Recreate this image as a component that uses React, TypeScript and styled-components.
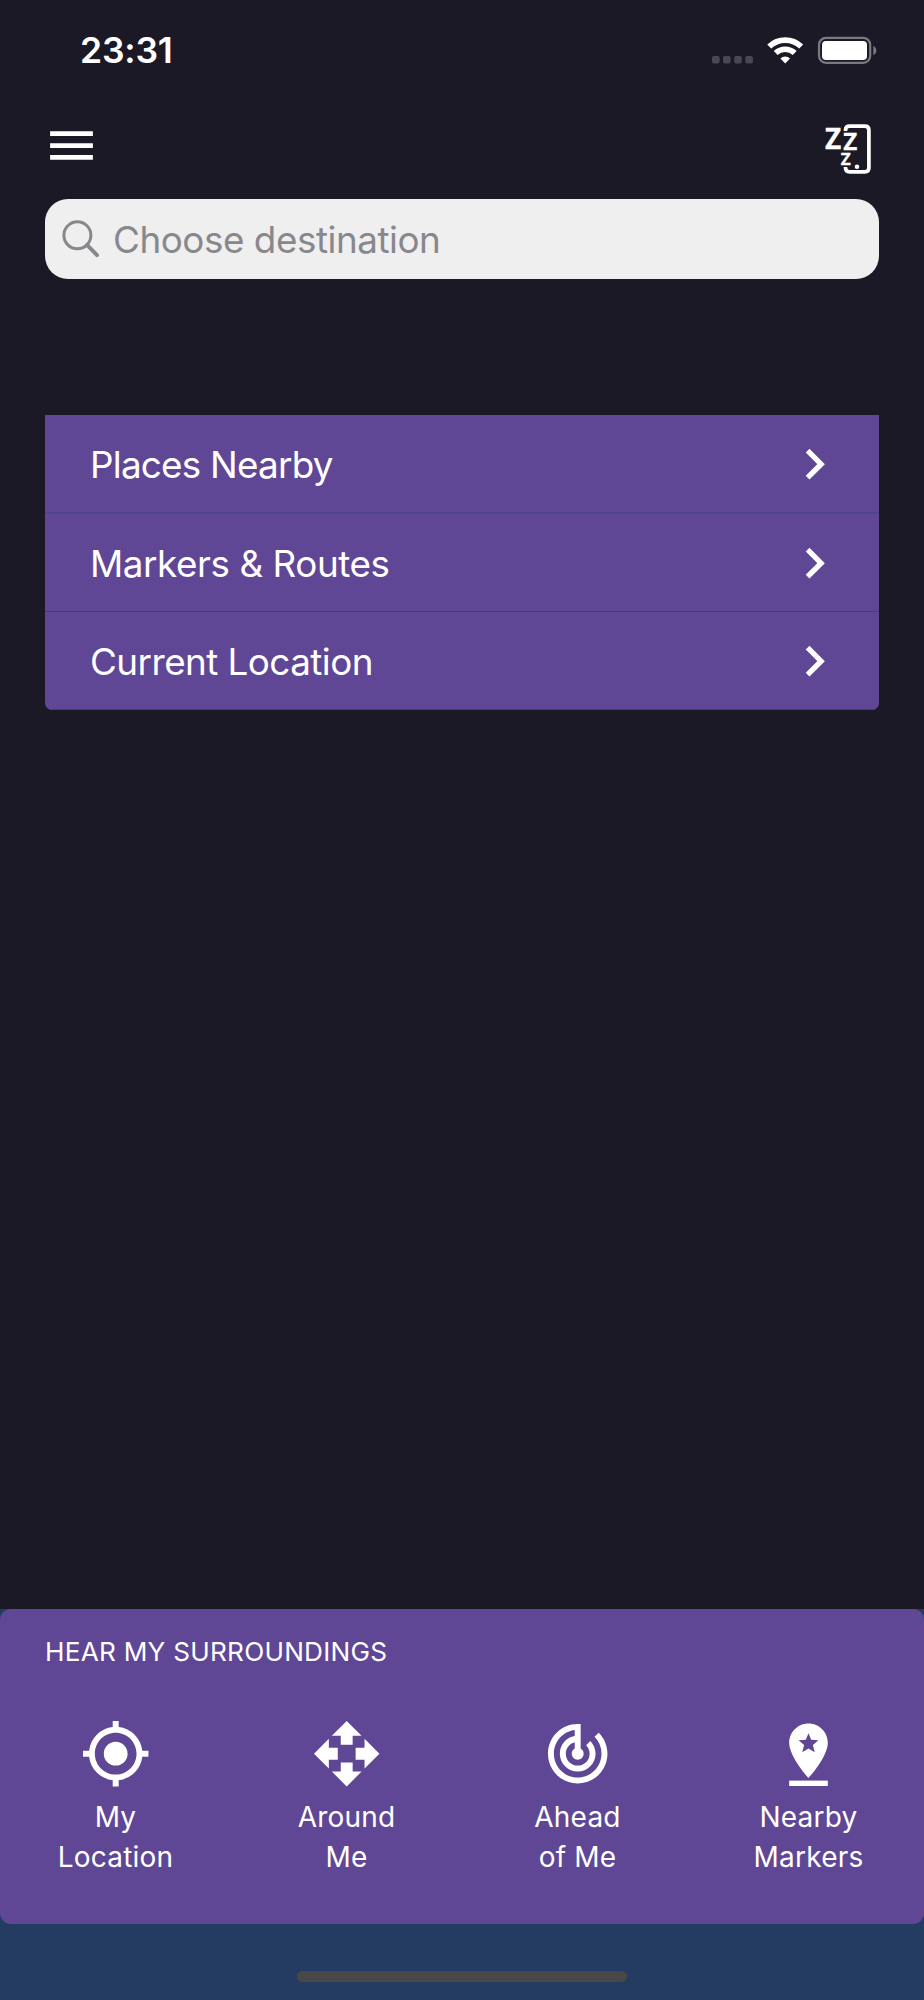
import React from "react";
import styled, { createGlobalStyle } from "styled-components";
import { MdMenu, MdMyLocation, MdOpenWith, MdTrackChanges } from "react-icons/md";

const GlobalStyle = createGlobalStyle`
  * { box-sizing: border-box; }
  body { margin: 0; background: #1b1926; }
  button { border: 0; padding: 0; background: none; font: inherit; color: inherit; }
  svg { display: block; flex: none; }
`;

const Screen = styled.div`
  width: 924px;
  height: 2000px;
  display: flex;
  flex-direction: column;
  background: #1b1926;
  color: #fff;
  font-family: Inter, "Liberation Sans", sans-serif;
`;

const StatusBar = styled.header`
  height: 102px;
  display: flex;
  align-items: center;
  justify-content: space-between;
  padding: 0 47px 0 80px;
`;

const Time = styled.time`
  font-size: 35.5px;
  font-weight: 600;
  line-height: 44px;
  letter-spacing: -0.2px;
`;

const StatusIcons = styled.div`
  display: flex;
  align-items: center;
`;

const NavBar = styled.nav`
  height: 97px;
  display: flex;
  align-items: center;
  justify-content: space-between;
  padding: 0 51px 3px 43px;
`;

const IconButton = styled.button<{ $drop?: number }>`
  display: flex;
  margin-top: ${(p) => p.$drop ?? 0}px;
`;

const SearchBar = styled.div`
  height: 80px;
  margin: 0 45px;
  padding-left: 16px;
  display: flex;
  align-items: center;
  border-radius: 23px;
  background: #efefef;
  color: #88888c;
`;

const SearchText = styled.span`
  margin-left: 14px;
  padding-top: 2px;
  font-size: 36.8px;
  line-height: 46px;
  letter-spacing: -0.45px;
`;

const Menu = styled.ul`
  list-style: none;
  margin: 136px 45px 0;
  padding: 0;
  border-radius: 0 0 7px 7px;
  overflow: hidden;
  background: #5f4796;
`;

const MenuItem = styled.li`
  height: 98px;
  display: flex;
  align-items: center;
  justify-content: space-between;
  padding: 1px 53px 0 45px;
  border-bottom: 1px solid #3f4079;
  font-size: 36.8px;
  line-height: 46px;

  &:first-child {
    height: 99px;
    border-bottom: 2px solid #4f4588;
  }
`;

const MenuLabel = styled.span<{ $tracking: number }>`
  padding-top: 1px;
  letter-spacing: ${(p) => p.$tracking}px;
`;

const Footer = styled.footer`
  margin-top: auto;
  height: 391px;
  background: #243c62;
  display: flex;
  flex-direction: column;
  align-items: center;
`;

const Panel = styled.section`
  width: 100%;
  height: 315px;
  padding-top: 27px;
  border-radius: 11px;
  background: #5f4796;
`;

const PanelTitle = styled.h2`
  margin: 0 0 0 45px;
  font-size: 26.2px;
  font-weight: 400;
  line-height: 32px;
  letter-spacing: 0.24px;
`;

const Actions = styled.div`
  margin-top: 50px;
  display: grid;
  grid-template-columns: repeat(4, 231px);
`;

const Action = styled.button`
  display: flex;
  flex-direction: column;
  align-items: center;
`;

const ActionIcon = styled.span`
  height: 72px;
  display: flex;
  align-items: center;
`;

const ActionLabel = styled.span`
  margin-top: 7px;
  font-size: 28px;
  line-height: 40px;
  letter-spacing: 0.2px;
  white-space: pre-line;
  text-align: center;
`;

const HomeIndicator = styled.div`
  width: 330px;
  height: 11px;
  margin-top: 47px;
  border-radius: 6px;
  background: #484848;
`;

const StatusGlyphs = () => (
  <svg width="166" height="30" viewBox="711 36 166 30">
    <g fill="#4a4953">
      <rect x="712" y="56" width="7.6" height="7.4" rx="2" />
      <rect x="723" y="56" width="7.6" height="7.4" rx="2" />
      <rect x="734.2" y="56" width="7.6" height="7.4" rx="2" />
      <rect x="745.3" y="56" width="7.6" height="7.4" rx="2" />
    </g>
    <g fill="none" stroke="#fff" strokeWidth="5.6">
      <path d="M769.2 46.6A23 23 0 0 1 801.2 46.6" />
      <path d="M775.7 53A13.8 13.8 0 0 1 794.7 53" />
    </g>
    <path d="M785.2 63.5L780.4 58.4A7 7 0 0 1 790 58.4Z" fill="#fff" />
    <rect x="819" y="37.8" width="51.2" height="25" rx="7" fill="none" stroke="#797981" strokeWidth="2.2" />
    <rect x="822" y="41" width="45" height="19" rx="4" fill="#fff" />
    <path d="M873.3 46C877.3 47.5 877.3 53.5 873.3 55Z" fill="#797981" />
  </svg>
);

const SleepIcon = () => (
  <svg width="53" height="62" viewBox="820 118 53 62">
    <path
      d="M845.5 131V130.2Q845.5 126.1 849.6 126.1H864.8Q868.9 126.1 868.9 130.2V167.8Q868.9 171.9 864.8 171.9H849.6Q845.5 171.9 845.5 167.8V167"
      fill="none"
      stroke="#fff"
      strokeWidth="3.7"
    />
    <circle cx="857" cy="166.7" r="2.3" fill="#fff" />
    <g fill="#fff" stroke="#fff" strokeWidth="0.3" fontFamily="Open Sans, sans-serif" fontWeight="700">
      <text x="825.1" y="149" fontSize="28">Z</text>
      <text x="843.3" y="150" fontSize="22.5" textLength="14" lengthAdjust="spacingAndGlyphs">Z</text>
      <text x="840.8" y="164.7" fontSize="15.5" textLength="10" lengthAdjust="spacingAndGlyphs">Z</text>
    </g>
  </svg>
);

const SearchIcon = () => (
  <svg width="38" height="38" viewBox="61 219.5 38 38" fill="none" stroke="#88888c">
    <circle cx="77.4" cy="234.8" r="13.5" strokeWidth="3" />
    <path d="M87 244.4L97 254.6" strokeWidth="4" strokeLinecap="round" />
  </svg>
);

const Chevron = () => (
  <svg width="22" height="34" viewBox="0 0 22 34">
    <path d="M3.6 3.7L17.1 17.2L3.6 30.7" fill="none" stroke="#fff" strokeWidth="5.3" />
  </svg>
);

const MarkerIcon = () => (
  <svg width="71" height="72" viewBox="772.8 1718 71 72" fill="#fff">
    <path
      fillRule="evenodd"
      d="M808.3 1723.4C797.6 1723.4 789 1732 789 1742.7C789 1757 808.3 1778 808.3 1778S827.6 1757 827.6 1742.7C827.6 1732 819 1723.4 808.3 1723.4ZM808.3 1733.2L811 1739.8L818.2 1740.3L812.7 1745L814.5 1752.3L808.3 1748.5L802.1 1752.3L803.9 1745L798.4 1740.3L805.6 1739.8Z"
    />
    <rect x="789" y="1780.6" width="38.6" height="5.4" />
  </svg>
);

const menu = [
  { label: "Places Nearby", tracking: -0.75 },
  { label: "Markers & Routes", tracking: -0.42 },
  { label: "Current Location", tracking: -0.54 },
];

const actions = [
  { label: "My\nLocation", icon: <MdMyLocation size={71.4} /> },
  { label: "Around\nMe", icon: <MdOpenWith size={71.4} /> },
  { label: "Ahead\nof Me", icon: <MdTrackChanges size={71.4} /> },
  { label: "Nearby\nMarkers", icon: <MarkerIcon /> },
];

export default function App() {
  return (
    <>
      <GlobalStyle />
      <Screen>
        <StatusBar>
          <Time>23:31</Time>
          <StatusIcons>
            <StatusGlyphs />
          </StatusIcons>
        </StatusBar>
        <NavBar>
          <IconButton aria-label="Menu" $drop={-7}>
            <MdMenu size={57} />
          </IconButton>
          <IconButton aria-label="Sleep">
            <SleepIcon />
          </IconButton>
        </NavBar>
        <SearchBar>
          <SearchIcon />
          <SearchText>Choose destination</SearchText>
        </SearchBar>
        <Menu>
          {menu.map((m) => (
            <MenuItem key={m.label}>
              <MenuLabel $tracking={m.tracking}>{m.label}</MenuLabel>
              <Chevron />
            </MenuItem>
          ))}
        </Menu>
        <Footer>
          <Panel>
            <PanelTitle>HEAR MY SURROUNDINGS</PanelTitle>
            <Actions>
              {actions.map((a) => (
                <Action key={a.label}>
                  <ActionIcon>{a.icon}</ActionIcon>
                  <ActionLabel>{a.label}</ActionLabel>
                </Action>
              ))}
            </Actions>
          </Panel>
          <HomeIndicator />
        </Footer>
      </Screen>
    </>
  );
}
